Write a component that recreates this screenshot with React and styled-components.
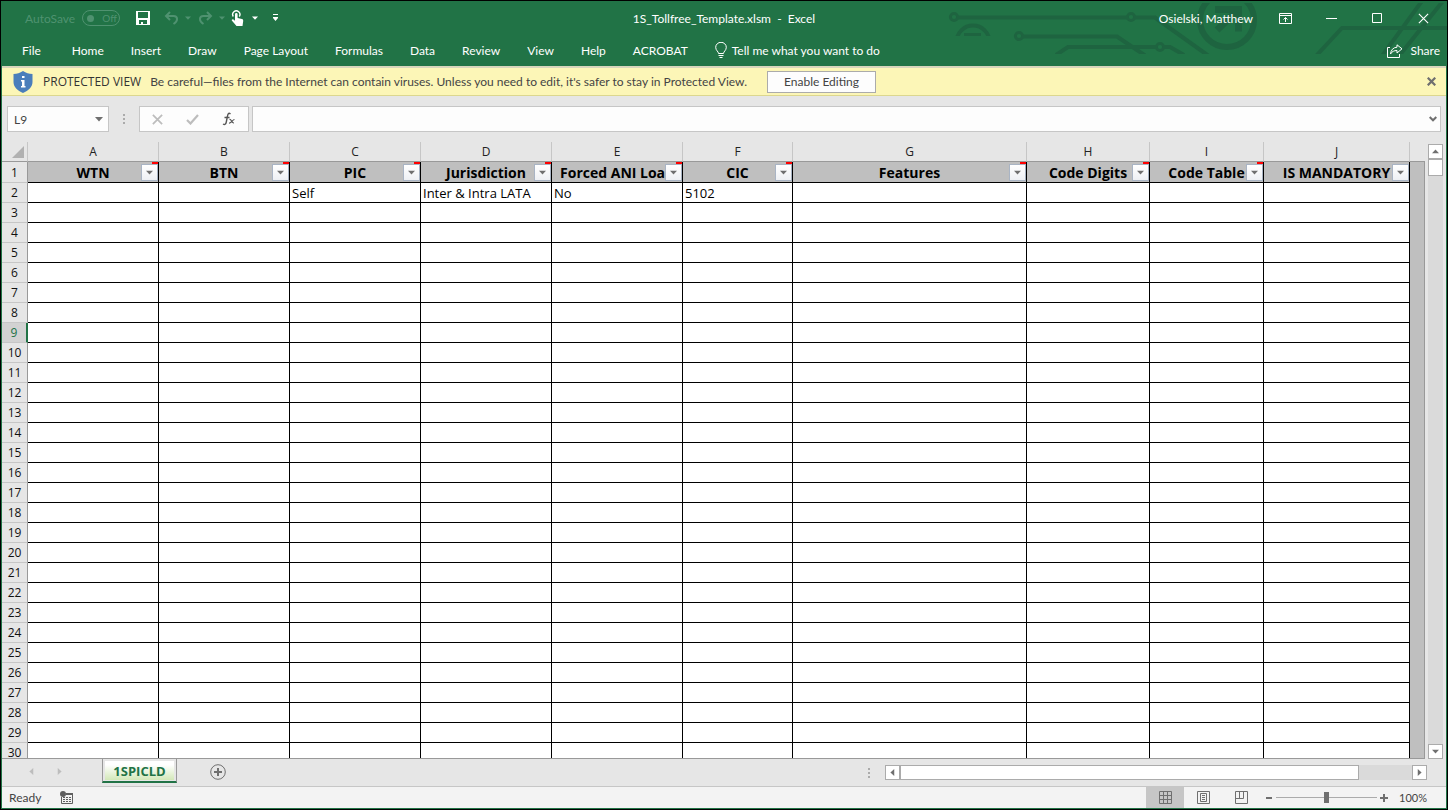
import React, { useState } from 'react';
import styled, { createGlobalStyle, css } from 'styled-components';

const colors = {
  green: '#217346',
  circuit: '#1e6440',
  faded: '#4f9270',
  yellow: '#fcf6b7',
  chrome: '#e6e6e6',
  status: '#f3f3f3',
  line: '#999999',
  softLine: '#c6c6c6',
  text: '#444444',
  icon: '#6f6f6f',
};

const fonts = {
  ui: "Lato, 'Open Sans', sans-serif",
  sheet: "'Open Sans', 'Noto Sans', sans-serif",
};

const menuItems = [
  'File',
  'Home',
  'Insert',
  'Draw',
  'Page Layout',
  'Formulas',
  'Data',
  'Review',
  'View',
  'Help',
  'ACROBAT',
];

const columns = [
  { letter: 'A', title: 'WTN', width: 131, note: true },
  { letter: 'B', title: 'BTN', width: 131, note: true },
  { letter: 'C', title: 'PIC', width: 131, note: true },
  { letter: 'D', title: 'Jurisdiction', width: 131, note: true },
  { letter: 'E', title: 'Forced ANI Load', width: 131, note: true },
  { letter: 'F', title: 'CIC', width: 110, note: true },
  { letter: 'G', title: 'Features', width: 234, note: true },
  { letter: 'H', title: 'Code Digits', width: 123, note: true },
  { letter: 'I', title: 'Code Table', width: 114, note: true },
  { letter: 'J', title: 'IS MANDATORY', width: 146, note: false },
];

const cells = {
  2: { C: 'Self', D: 'Inter & Intra LATA', E: 'No', F: '5102' },
};

const rows = Array.from({ length: 29 }, (_, i) => i + 2);
const activeRow = 9;

const GlobalStyle = createGlobalStyle`
  * {
    box-sizing: border-box;
  }

  body {
    margin: 0;
    font-family: ${fonts.ui};
    font-size: 12px;
    color: ${colors.text};
  }

  button,
  input {
    margin: 0;
    padding: 0;
    border: 0;
    background: none;
    font: inherit;
    color: inherit;
  }

  svg {
    display: block;
  }
`;

const Window = styled.div`
  display: flex;
  flex-direction: column;
  height: 100vh;
  border: 1px solid #000;
  overflow: hidden;
  background: ${colors.chrome};
`;

const Header = styled.header`
  position: relative;
  flex: none;
  background: ${colors.green};
  color: #fff;
`;

const Circuit = styled.svg`
  position: absolute;
  top: 0;
  right: 0;
  fill: none;
  stroke: ${colors.circuit};
`;

const TitleBar = styled.div`
  position: relative;
  display: grid;
  grid-template-columns: 1fr auto 1fr;
  align-items: center;
  height: 34px;
`;

const QuickAccess = styled.div`
  display: flex;
  align-items: center;
  padding-left: 24px;
  color: ${colors.faded};
`;

const Switch = styled.button`
  display: flex;
  align-items: center;
  gap: 8px;
  width: 38px;
  height: 16px;
  margin: 0 9px 0 7px;
  padding-left: 4px;
  border: 1px solid ${colors.faded};
  border-radius: 8px;
  font-size: 10px;

  &:before {
    content: '';
    width: 7px;
    height: 7px;
    border-radius: 50%;
    background: ${colors.faded};
  }
`;

const IconButton = styled.button`
  display: flex;
  align-items: center;
  justify-content: center;
  flex: none;
  width: ${props => props.$width || 28}px;
  height: 18px;
  color: ${props => (props.$faded ? colors.faded : '#fff')};
`;

const Title = styled.h1`
  margin: 0;
  font-size: 12px;
  font-weight: 400;
  white-space: pre;
`;

const Account = styled.div`
  display: flex;
  align-items: center;
  justify-content: flex-end;
  padding-right: 1px;
`;

const UserName = styled.button`
  margin-right: 9px;
  white-space: nowrap;
`;

const Ribbon = styled.nav`
  position: relative;
  display: flex;
  align-items: center;
  gap: 27px;
  height: 31px;
  padding: 0 7px 0 21px;
`;

const Tab = styled.button`
  white-space: nowrap;

  &:first-child {
    margin-right: 4px;
  }
`;

const IconTab = styled(Tab)`
  display: flex;
  align-items: center;
  gap: 5px;
`;

const ShareTab = styled(IconTab)`
  margin-left: auto;
  gap: 7px;
`;

const Frame = styled.div`
  display: flex;
  flex-direction: column;
  flex: 1;
  min-height: 0;
  border: solid ${colors.green};
  border-width: 0 1px 1px;
`;

const MessageBar = styled.div`
  display: flex;
  align-items: center;
  flex: none;
  height: 30px;
  padding: 0 10px 0 11px;
  border-top: 2px solid #d8d5bb;
  border-bottom: 1px solid #dcd78f;
  background: ${colors.yellow};
  white-space: nowrap;
`;

const MessageTitle = styled.strong`
  margin: 0 9px 0 10px;
  font-family: ${fonts.sheet};
  font-weight: 400;
  color: #333;
`;

const EnableButton = styled.button`
  width: 109px;
  height: 22px;
  margin: 0 auto 0 20px;
  border: 1px solid #ababab;
  background: #fdfdfd;
`;

const FormulaBar = styled.div`
  display: flex;
  align-items: center;
  flex: none;
  height: 46px;
  padding: 0 5px;
`;

const boxed = css`
  display: flex;
  align-items: center;
  height: 26px;
  border: 1px solid ${colors.softLine};
  background: #fdfdfd;
`;

const NameBox = styled.div`
  ${boxed}
  width: 102px;
  padding: 0 5px 0 6px;
  color: ${colors.icon};
`;

const FormulaActions = styled.div`
  ${boxed}
  justify-content: space-around;
  width: 110px;
`;

const FormulaField = styled.div`
  ${boxed}
  flex: 1;
  margin-left: 3px;
  padding: 0 3px;
`;

const TextInput = styled.input`
  flex: 1;
  min-width: 0;
  outline: none;
  color: ${colors.text};
`;

const Grip = styled.span`
  display: flex;
  flex-direction: column;
  gap: 2px;
  margin: 0 ${props => props.$space}px;

  i {
    width: 2px;
    height: 2px;
    background: #ababab;
  }
`;

const SheetArea = styled.main`
  display: flex;
  flex: 1;
  min-height: 0;
`;

const Viewport = styled.div`
  display: flex;
  flex: 1;
  min-width: 0;
  overflow: hidden;
  border-bottom: 1px solid ${colors.line};
`;

const Grid = styled.table`
  flex: none;
  align-self: flex-start;
  width: 1408px;
  table-layout: fixed;
  border-collapse: separate;
  border-spacing: 0;
  font-family: ${fonts.sheet};
  font-size: 13px;
  line-height: 18px;
  color: #000;
`;

const Letter = styled.th`
  height: 20px;
  padding: 0;
  border-right: 1px solid ${colors.softLine};
  border-bottom: 1px solid ${colors.line};
  font-size: 12px;
  font-weight: 400;
  color: #222;
`;

const Corner = styled(Letter)`
  svg {
    margin-left: 10px;
  }
`;

const RowNumber = styled.th`
  height: ${props => (props.$first ? 21 : 20)}px;
  padding: 1px 0 0;
  border-right: 1px solid ${colors.line};
  border-bottom: 1px solid ${colors.softLine};
  font-size: 12px;
  font-weight: 400;
  color: #111;

  ${props =>
    props.$active &&
    css`
      border-right: 2px solid ${colors.green};
      background: #d2d2d2;
      color: ${colors.green};
    `}
`;

const TitleCell = styled.th`
  position: relative;
  padding: 1px 0 0;
  border-right: 1px solid #000;
  border-bottom: 1px solid #000;
  background: #bfbfbf;
  font-size: 14px;
  white-space: nowrap;
`;

const NoteMark = styled.span`
  position: absolute;
  top: 0;
  right: 0;
  width: 6px;
  height: 2px;
  background: #f00;
`;

const FilterButton = styled.button`
  position: absolute;
  right: 0;
  bottom: 1px;
  display: flex;
  align-items: center;
  justify-content: center;
  width: 17px;
  height: 17px;
  border: 1px solid #a9b4c4;
  background: linear-gradient(#fff, #eef0f4);
  color: ${colors.icon};
`;

const Cell = styled.td`
  padding: 0 2px;
  border-right: 1px solid #000;
  border-bottom: 1px solid #000;
  background: #fff;
  white-space: nowrap;
`;

const Outside = styled.div`
  flex: 1;
  margin-top: 19px;
  border-top: 1px solid ${colors.line};
  border-right: 1px solid ${colors.line};
  background: #bfbfbf;
`;

const VerticalScroll = styled.div`
  display: flex;
  flex-direction: column;
  width: 15px;
  margin: 2px 3px 0;
  background: #dadada;
`;

const HorizontalScroll = styled.div`
  display: flex;
  width: 542px;
  height: 15px;
  background: #dadada;
`;

const ScrollButton = styled.button`
  display: flex;
  align-items: center;
  justify-content: center;
  flex: none;
  width: 15px;
  height: 15px;
  border: 1px solid #ababab;
  background: #fff;
  color: ${colors.icon};

  &:last-child {
    margin-${props => props.$side}: auto;
  }
`;

const Thumb = styled.div`
  width: ${props => (props.$horizontal ? '459px' : '15px')};
  height: ${props => (props.$horizontal ? '15px' : '17px')};
  border: 1px solid #ababab;
  background: #fff;
`;

const SheetTabs = styled.div`
  display: flex;
  align-items: center;
  flex: none;
  height: 27px;
  padding: 0 19px 0 15px;
`;

const SheetTabList = styled.div`
  display: flex;
  align-items: center;
  flex: 1;
  align-self: stretch;
  padding-bottom: 2px;
`;

const TabArrow = styled.button`
  width: 28px;
  color: #bdbdbd;

  svg {
    margin: 0 auto;
  }
`;

const SheetTab = styled.button`
  align-self: flex-start;
  width: 75px;
  height: 25px;
  margin: -1px 33px 0 29px;
  border: 1px solid ${colors.line};
  border-width: 0 1px 2px;
  border-bottom-color: ${colors.green};
  background: linear-gradient(#fff 20%, #d3e8b8) content-box #fff;
  padding: 3px 2px 1px;
  font-family: ${fonts.sheet};
  font-size: 13px;
  font-weight: 700;
  line-height: 18px;
  color: ${colors.green};
`;

const StatusBar = styled.footer`
  display: flex;
  align-items: center;
  flex: none;
  height: 22px;
  padding: 0 19px 0 7px;
  border-top: 1px solid ${colors.softLine};
  background: ${colors.status};
`;

const MacroButton = styled.button`
  margin: 0 auto 0 19px;
`;

const Views = styled.div`
  display: flex;
  margin-right: 6px;
`;

const ViewButton = styled.button`
  display: flex;
  align-items: center;
  justify-content: center;
  width: 38px;
  height: 21px;
  background: ${props => (props.$active ? colors.softLine : 'transparent')};
`;

const ZoomStep = styled.button`
  color: ${colors.icon};
`;

const ZoomSlider = styled.input`
  width: 101px;
  height: 11px;
  margin: 0 3px 0 4px;
  appearance: none;
  background: linear-gradient(#ababab, #ababab) center / 100% 1px no-repeat;

  &::-webkit-slider-thumb {
    appearance: none;
    width: 5px;
    height: 11px;
    background: ${colors.icon};
  }
`;

const ZoomValue = styled.button`
  margin-left: 11px;
  font-size: 11px;
`;

const Caret = ({ direction = 'down', size = 7 }) => {
  const turns = { down: 0, left: 90, up: 180, right: 270 };
  return (
    <svg width={size} height={size} viewBox="0 0 8 8" fill="currentColor">
      <path d="M0 2h8L4 6.4z" transform={`rotate(${turns[direction]} 4 4)`} />
    </svg>
  );
};

const CircuitArt = () => (
  <Circuit width="500" height="54" viewBox="947 1 500 54">
    <clipPath id="circuit-clip">
      <path d="M947 3h500v51H947z" />
    </clipPath>
    <clipPath id="arc-clip">
      <path d="M947 3h60v33h-60z" />
    </clipPath>
    <g clipPath="url(#circuit-clip)" strokeWidth="4">
      <circle cx="954" cy="17" r="3.6" strokeWidth="3" />
      <circle cx="1131" cy="17" r="3.6" strokeWidth="3" />
      <path d="M958 17.500h169M1135 17.500h20l53 38" />
      <circle cx="973" cy="42" r="16.500" clipPath="url(#arc-clip)" />
      <path d="M964 34.500h17" strokeWidth="3" />
      <circle cx="1019" cy="36" r="3.600" strokeWidth="3" />
      <path d="M1023 36.500h94l28 19" />
      <circle cx="1160" cy="47" r="3.600" strokeWidth="3" />
      <path d="M1056 55l12-8h88M1164 47h6l14 8" />
      <circle cx="1227" cy="20" r="27" strokeWidth="6" />
      <path d="M1215 9.500h23.500v22M1238 10l-21 20" strokeWidth="7" />
      <path d="M1316 56l26-28h105M1382 56l40-55M1399 56l44-55" />
    </g>
  </Circuit>
);

const SaveIcon = () => (
  <svg width="14" height="14" viewBox="0 0 14 14">
    <path fill="#fff" fillRule="evenodd" d="M0 0h14v14H0zM2 1v6h10V1zM3 9v4h2v-2h2v2h4V9z" />
  </svg>
);

const UndoIcon = ({ flip }) => (
  <svg width="15" height="14" viewBox="0 0 15 14" fill="none" stroke="currentColor" strokeWidth="2">
    <g transform={flip ? 'translate(15 0) scale(-1 1)' : undefined}>
      <path d="M6 1L2 5l4 4M2 5h7.500c4.500 0 5 5 0 8" />
    </g>
  </svg>
);

const TouchIcon = () => (
  <svg width="13" height="16" viewBox="0 0 13 16">
    <path d="M2.300 6.500a3.600 3.600 0 1 1 6 0" fill="none" stroke="#fff" strokeWidth="1.400" />
    <path
      fill="#fff"
      d="M4 4.200a1.300 1.300 0 0 1 2.600 0V8l4.400 1c1 .3 1.300 1 1.200 2L11.500 16H5.500L1 10.800c-.8-1 .5-2 1.400-1.300L4 10.800z"
    />
  </svg>
);

const CustomizeIcon = () => (
  <svg width="7" height="8" viewBox="0 0 7 8" fill="#fff">
    <path d="M1 0h5v1H1zM1 3h5v1H6L3.500 7 1 4z" />
  </svg>
);

const RibbonIcon = () => (
  <svg width="13" height="11" viewBox="0 0 13 11" fill="none" stroke="#fff">
    <path d="M.5.500h12v10H.5zM.5 2.500h12M6.500 9V4.500M4.500 6.500l2-2 2 2" />
  </svg>
);

const BulbIcon = () => (
  <svg width="12" height="17" viewBox="0 0 12 17" fill="none" stroke="#fff">
    <path d="M3.500 11.500c0-2-2.800-3-2.800-6.200a5.300 5 0 0 1 10.600 0c0 3.200-2.800 4.200-2.800 6.200zM3.500 13.500h5M4.500 15.500h3" />
  </svg>
);

const ShareIcon = () => (
  <svg width="16" height="14" viewBox="0 0 16 14" fill="none" stroke="#fff">
    <path d="M3 3.500H.5v10h12V10" />
    <path d="M10 .8l5 4-5 4.200V6.500C7 6.500 5 7.500 3.500 10 4 6 6 3.500 10 3.200z" />
  </svg>
);

const ShieldIcon = () => (
  <svg width="20" height="22" viewBox="0 0 20 22">
    <path
      fill="#4a7ebb"
      d="M10 0c3 2 6 3 9.500 3v8c0 5-4 8.500-9.500 11C4.500 19.500.5 16 .5 11V3C4 3 7 2 10 0z"
    />
    <path fill="#fff" d="M9 5h2.500v2H9zM8 9h3.500v6h1v1.500H8V15h1v-4.500H8z" />
  </svg>
);

const CrossIcon = ({ size, color, weight }) => (
  <svg width={size} height={size} viewBox="0 0 10 10" fill="none" stroke={color} strokeWidth={weight}>
    <path d="M.8.800l8.400 8.400M9.200.800L.8 9.200" />
  </svg>
);

const FxIcon = () => (
  <svg width="14" height="14" viewBox="0 0 14 14" fill="none" stroke="#555" strokeWidth="1.400">
    <path d="M8.500 2C6.500.3 5.800 2 5.400 4.500L4.300 10c-.5 2.400-1.500 3-3.300 2M2.500 5.500h5" />
    <path d="M7.500 7.500c2-.8 2 3.800 4.500 3.500M12.500 7.500c-2 0-3 4-5.500 3.500" strokeWidth="1.200" />
  </svg>
);

const MacroIcon = () => (
  <svg width="13" height="13" viewBox="0 0 13 13" fill="none" stroke="#5f5f5f">
    <path d="M1.500 6v6.500h11v-10H7" />
    <path d="M6 2h7v2H6z" fill="#5f5f5f" stroke="none" />
    <path d="M3 6.500h8M3 8.500h8M3 10.500h8" strokeDasharray="2 1" />
    <circle cx="3" cy="3" r="3" fill="#5f5f5f" stroke="none" />
  </svg>
);

const viewIcons = {
  Normal: 'M.5.500h12v12H.5zM4.500.500v12M8.500.500v12M.5 4.500h12M.5 8.500h12',
  'Page Layout': 'M.5.500h12v12H.5zM3.500 2.500h6v8h-6zM5 4.500h3M5 6.500h3M5 8.500h3',
  'Page Break Preview': 'M.5.500h12v12H.5zM.5 7.500h8v-7M4.500.500v7',
};

const Dots = ({ space }) => (
  <Grip $space={space}>
    <i />
    <i />
    <i />
  </Grip>
);

const App = () => {
  const [formula, setFormula] = useState('');
  const [nameBox, setNameBox] = useState('L9');
  const [zoom, setZoom] = useState(100);
  const [view, setView] = useState('Normal');

  return (
    <Window>
      <GlobalStyle />
      <Header>
        <CircuitArt />
        <TitleBar>
          <QuickAccess>
            <span>AutoSave</span>
            <Switch role="switch" aria-checked="false" aria-label="AutoSave">
              Off
            </Switch>
            <IconButton aria-label="Save">
              <SaveIcon />
            </IconButton>
            <IconButton aria-label="Undo" $faded>
              <UndoIcon />
            </IconButton>
            <IconButton aria-label="Undo list" $faded $width={6}>
              <Caret size={6} />
            </IconButton>
            <IconButton aria-label="Redo" $faded>
              <UndoIcon flip />
            </IconButton>
            <IconButton aria-label="Redo list" $faded $width={6}>
              <Caret size={6} />
            </IconButton>
            <IconButton aria-label="Touch mode" $width={24}>
              <TouchIcon />
            </IconButton>
            <IconButton aria-label="Touch mode list" $width={12}>
              <Caret size={6} />
            </IconButton>
            <IconButton aria-label="Customize toolbar">
              <CustomizeIcon />
            </IconButton>
          </QuickAccess>
          <Title>{'1S_Tollfree_Template.xlsm  -  Excel'}</Title>
          <Account>
            <UserName>Osielski, Matthew</UserName>
            <IconButton aria-label="Ribbon display options" $width={46}>
              <RibbonIcon />
            </IconButton>
            <IconButton aria-label="Minimize" $width={46}>
              <svg width="11" height="11" stroke="#fff">
                <path d="M0 5.500h11" />
              </svg>
            </IconButton>
            <IconButton aria-label="Maximize" $width={46}>
              <svg width="10" height="10" fill="none" stroke="#fff">
                <path d="M.5.500h9v9H.5z" />
              </svg>
            </IconButton>
            <IconButton aria-label="Close" $width={46}>
              <CrossIcon size={11} color="#fff" weight={1} />
            </IconButton>
          </Account>
        </TitleBar>
        <Ribbon>
          {menuItems.map(item => (
            <Tab key={item}>{item}</Tab>
          ))}
          <IconTab>
            <BulbIcon />
            Tell me what you want to do
          </IconTab>
          <ShareTab>
            <ShareIcon />
            Share
          </ShareTab>
        </Ribbon>
      </Header>

      <Frame>
        <MessageBar>
          <ShieldIcon />
          <MessageTitle>PROTECTED VIEW</MessageTitle>
          <span>
            Be careful—files from the Internet can contain viruses. Unless you need to edit, it's
            safer to stay in Protected View.
          </span>
          <EnableButton>Enable Editing</EnableButton>
          <button aria-label="Close message">
            <CrossIcon size={9} color={colors.icon} weight={2.5} />
          </button>
        </MessageBar>

        <FormulaBar>
          <NameBox>
            <TextInput
              aria-label="Name box"
              value={nameBox}
              onChange={e => setNameBox(e.target.value)}
            />
            <Caret size={8} />
          </NameBox>
          <Dots space={14} />
          <FormulaActions>
            <button aria-label="Cancel">
              <CrossIcon size={11} color="#bdbdbd" weight={1.6} />
            </button>
            <button aria-label="Enter">
              <svg width="13" height="11" viewBox="0 0 13 11" fill="none" stroke="#bdbdbd">
                <path d="M1 6l3.500 3.500L12 1" strokeWidth="2.200" />
              </svg>
            </button>
            <button aria-label="Insert function">
              <FxIcon />
            </button>
          </FormulaActions>
          <FormulaField>
            <TextInput
              aria-label="Formula bar"
              value={formula}
              onChange={e => setFormula(e.target.value)}
            />
            <button aria-label="Expand formula bar">
              <svg width="8" height="6" viewBox="0 0 8 6" fill="none" stroke={colors.icon}>
                <path d="M.7 1L4 4.300 7.300 1" strokeWidth="2" />
              </svg>
            </button>
          </FormulaField>
        </FormulaBar>

        <SheetArea>
          <Viewport>
            <Grid>
              <colgroup>
                <col width="26" />
                {columns.map(column => (
                  <col key={column.letter} width={column.width} />
                ))}
              </colgroup>
              <thead>
                <tr>
                  <Corner aria-label="Select all">
                    <svg width="12" height="12" fill="#b1b1b1">
                      <path d="M12 0v12H0z" />
                    </svg>
                  </Corner>
                  {columns.map(column => (
                    <Letter key={column.letter}>{column.letter}</Letter>
                  ))}
                </tr>
              </thead>
              <tbody>
                <tr>
                  <RowNumber $first>1</RowNumber>
                  {columns.map(column => (
                    <TitleCell key={column.letter}>
                      {column.title}
                      {column.note && <NoteMark />}
                      <FilterButton aria-label={`Filter ${column.title}`}>
                        <Caret />
                      </FilterButton>
                    </TitleCell>
                  ))}
                </tr>
                {rows.map(row => (
                  <tr key={row}>
                    <RowNumber $active={row === activeRow}>{row}</RowNumber>
                    {columns.map(column => (
                      <Cell key={column.letter}>{cells[row]?.[column.letter]}</Cell>
                    ))}
                  </tr>
                ))}
              </tbody>
            </Grid>
            <Outside />
          </Viewport>
          <VerticalScroll>
            <ScrollButton aria-label="Scroll up">
              <Caret direction="up" />
            </ScrollButton>
            <Thumb />
            <ScrollButton aria-label="Scroll down" $side="top">
              <Caret direction="down" />
            </ScrollButton>
          </VerticalScroll>
        </SheetArea>

        <SheetTabs>
          <SheetTabList>
            <TabArrow aria-label="Previous sheet">
              <Caret direction="left" />
            </TabArrow>
            <TabArrow aria-label="Next sheet">
              <Caret direction="right" />
            </TabArrow>
            <SheetTab>1SPICLD</SheetTab>
            <button aria-label="New sheet">
              <svg width="16" height="16" viewBox="0 0 16 16" fill="none" stroke={colors.icon}>
                <circle cx="8" cy="8" r="7.300" />
                <path d="M8 4v8M4 8h8" strokeWidth="2" />
              </svg>
            </button>
          </SheetTabList>
          <Dots space={15} />
          <HorizontalScroll>
            <ScrollButton aria-label="Scroll left">
              <Caret direction="left" />
            </ScrollButton>
            <Thumb $horizontal />
            <ScrollButton aria-label="Scroll right" $side="left">
              <Caret direction="right" />
            </ScrollButton>
          </HorizontalScroll>
        </SheetTabs>

        <StatusBar>
          <span>Ready</span>
          <MacroButton aria-label="Record macro">
            <MacroIcon />
          </MacroButton>
          <Views>
            {Object.keys(viewIcons).map(name => (
              <ViewButton
                key={name}
                aria-label={name}
                $active={name === view}
                onClick={() => setView(name)}
              >
                <svg width="13" height="13" fill="none" stroke={colors.icon}>
                  <path d={viewIcons[name]} />
                </svg>
              </ViewButton>
            ))}
          </Views>
          <ZoomStep aria-label="Zoom out" onClick={() => setZoom(zoom - 10)}>
            <svg width="6" height="8" fill="currentColor">
              <path d="M0 3h6v2H0z" />
            </svg>
          </ZoomStep>
          <ZoomSlider
            type="range"
            aria-label="Zoom"
            min="10"
            max="190"
            value={zoom}
            onChange={e => setZoom(Number(e.target.value))}
          />
          <ZoomStep aria-label="Zoom in" onClick={() => setZoom(zoom + 10)}>
            <svg width="8" height="8" fill="currentColor">
              <path d="M0 3h8v2H0zM3 0h2v8H3z" />
            </svg>
          </ZoomStep>
          <ZoomValue>{zoom}%</ZoomValue>
        </StatusBar>
      </Frame>
    </Window>
  );
};

export default App;
